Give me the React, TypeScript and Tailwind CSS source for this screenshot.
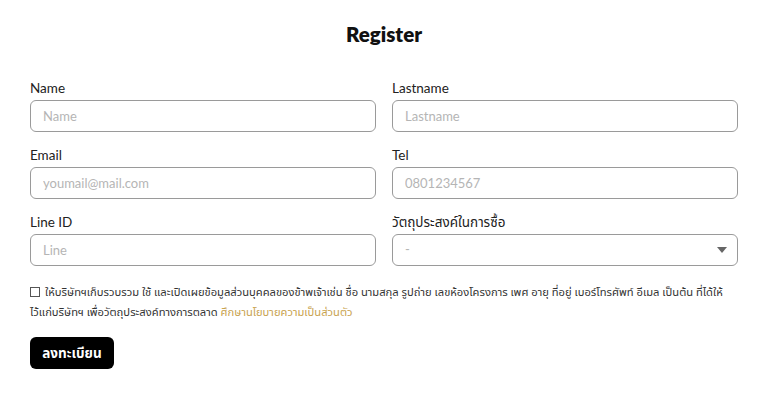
// ============ FORM FIELDS ============
const fields = [
  { label: "Name", placeholder: "Name" },
  { label: "Lastname", placeholder: "Lastname" },
  { label: "Email", placeholder: "youmail@mail.com" },
  { label: "Tel", placeholder: "0801234567" },
  { label: "Line ID", placeholder: "Line" },
]

const font = "font-['Lato','Noto_Sans','Noto_Sans_Thai','Tahoma',sans-serif]"

export default function App() {
  return (
    <div className={`w-[768px] h-[401px] bg-white px-[30px] pt-[22px] text-[#1f1f1f] ${font}`}>
      {/* Title */}
      <h1 className="text-center text-[20.5px] leading-6 font-extrabold text-[#111]">Register</h1>

      {/* Fields */}
      <div className="mt-[34px] grid grid-cols-2 gap-x-4 gap-y-[15px]">
        {fields.map((f) => (
          <div key={f.label} className="flex flex-col gap-1">
            <label className="text-[13.5px] leading-4 text-[#222]">{f.label}</label>
            <input
              placeholder={f.placeholder}
              className="h-8 w-full rounded-md border border-[#9a9a9a] px-3 text-[13px] text-[#333] placeholder:text-[#b5b5b5] outline-none"
            />
          </div>
        ))}
        <div className="flex flex-col gap-1">
          <label className="text-[13.5px] leading-4 text-[#222]">วัตถุประสงค์ในการซื้อ</label>
          <div className="flex h-8 w-full items-center justify-between rounded-md border border-[#9a9a9a] pl-3 pr-[10px]">
            <span className="text-[13px] text-[#b5b5b5]">-</span>
            <svg width="10" height="6" viewBox="0 0 10 6" className="text-[#666]">
              <path d="M0 0h10L5 6z" fill="currentColor" />
            </svg>
          </div>
        </div>
      </div>

      {/* Consent */}
      <p className="mt-4 text-[11.2px] leading-5 text-[#333]">
        <span className="whitespace-nowrap">
          <span className="mr-[5px] inline-block h-[10px] w-[10px] border border-[#555] bg-white align-[-1px]" />
          ให้บริษัทฯเก็บรวบรวม ใช้ และเปิดเผยข้อมูลส่วนบุคคลของข้าพเจ้าเช่น ชื่อ นามสกุล รูปถ่าย เลขห้องโครงการ เพศ อายุ ที่อยู่ เบอร์โทรศัพท์ อีเมล เป็นต้น ที่ได้ให้
        </span>
        <br />
        ไว้แก่บริษัทฯ เพื่อวัตถุประสงค์ทางการตลาด{" "}
        <a className="text-[#c9a350]">ศึกษานโยบายความเป็นส่วนตัว</a>
      </p>

      {/* Submit */}
      <button className="mt-[15px] h-8 w-[84px] rounded-md bg-black text-[13.5px] font-bold text-white">ลงทะเบียน</button>
    </div>
  )
}
